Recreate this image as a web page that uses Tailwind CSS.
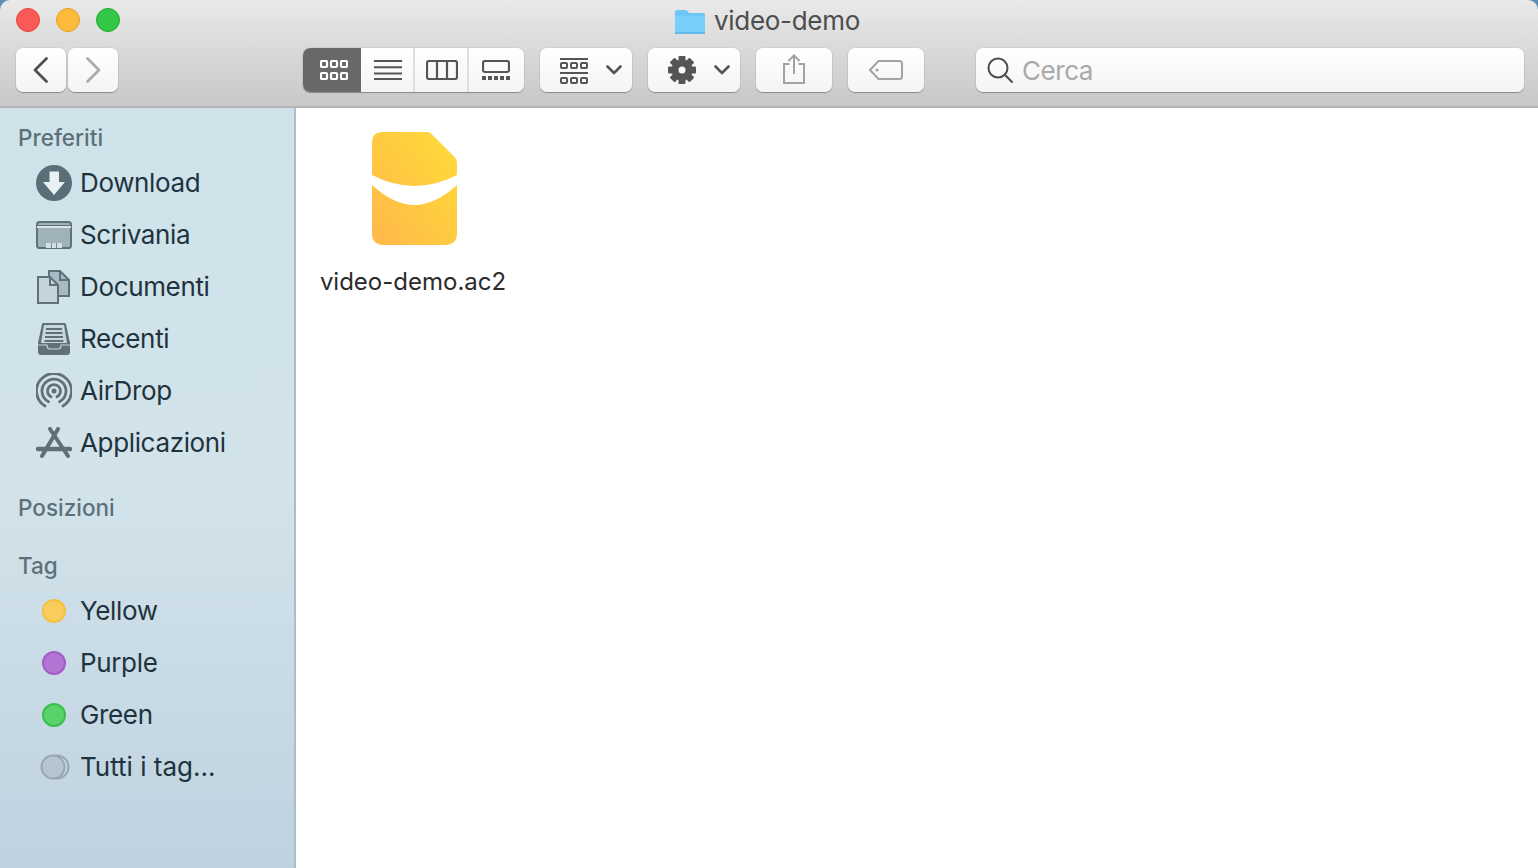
<!DOCTYPE html>
<html lang="en">
<head>
  <meta charset="UTF-8" />
  <title>video-demo</title>
  <script src="https://cdn.jsdelivr.net/npm/@tailwindcss/browser@4"></script>
</head>
<body class="h-[868px] w-[1538px] overflow-hidden bg-[#5b8db5] font-['Inter','Noto_Sans',sans-serif]">
  <div class="flex h-full flex-col overflow-hidden rounded-t-[10px]">

    <!-- Toolbar -->
    <header class="h-[108px] shrink-0 border-b-2 border-[#b4b4b4] bg-linear-to-b from-[#e9e9e9] to-[#c8c8c8]">
      <div class="relative flex h-[48px] items-start">
        <div class="ml-[16px] mt-[8px] flex gap-[16px]">
          <span class="size-[24px] rounded-full border border-[#e2463f] bg-[#fc5a56]"></span>
          <span class="size-[24px] rounded-full border border-[#dfa123] bg-[#fdbb3d]"></span>
          <span class="size-[24px] rounded-full border border-[#1fa82e] bg-[#33c748]"></span>
        </div>
        <div class="absolute left-[674px] top-[6px] flex items-center gap-[8px]">
          <svg width="32" height="27" viewBox="0 0 32 27">
            <path d="M1 4.500Q1 2 3.500 2H11Q13 2 14 3.500L15 5H29Q31 5 31 7V24Q31 26 29 26H3Q1 26 1 24Z" fill="#6cc6f7"/>
            <path d="M1 8H31V24Q31 26 29 26H3Q1 26 1 24Z" fill="#78cffb"/>
            <path d="M1 25H31" stroke="#4fa6dc" stroke-width="1"/>
          </svg>
          <span class="text-[26px] leading-[30px] tracking-[-0.3px] text-[#4d4d4d]">video-demo</span>
        </div>
      </div>

      <div class="flex h-[46px] items-start">
        <!-- back / forward -->
        <div class="ml-[16px] flex gap-[2px]">
          <button class="flex h-[44px] w-[50px] items-center justify-center rounded-[7px] bg-linear-to-b from-white to-[#f4f4f4] shadow-[0_0_0_0.5px_rgba(0,0,0,0.08),0_1px_1px_rgba(0,0,0,0.3)]">
            <svg width="18" height="28" viewBox="0 0 18 28" fill="none" stroke="#4f4f4f" stroke-width="2.800" stroke-linecap="round" stroke-linejoin="round"><path d="M14.500 2.500L3 14L14.500 25.500"/></svg>
          </button>
          <button class="flex h-[44px] w-[50px] items-center justify-center rounded-[7px] bg-linear-to-b from-white to-[#f4f4f4] shadow-[0_0_0_0.5px_rgba(0,0,0,0.08),0_1px_1px_rgba(0,0,0,0.3)]">
            <svg width="18" height="28" viewBox="0 0 18 28" fill="none" stroke="#ababab" stroke-width="2.800" stroke-linecap="round" stroke-linejoin="round"><path d="M3.500 2.500L15 14L3.500 25.500"/></svg>
          </button>
        </div>

        <!-- view modes -->
        <div class="ml-[185px] flex h-[44px] w-[221px] overflow-hidden rounded-[7px] bg-linear-to-b from-white to-[#f4f4f4] shadow-[0_0_0_0.5px_rgba(0,0,0,0.08),0_1px_1px_rgba(0,0,0,0.3)]">
          <button class="flex w-[58px] items-center bg-[#686868] pl-[17px]">
            <svg width="28" height="20" viewBox="0 0 28 20" fill="none" stroke="#fff" stroke-width="2.200"><rect x="1" y="1" width="6" height="6" rx="1"/><rect x="11" y="1" width="6" height="6" rx="1"/><rect x="21" y="1" width="6" height="6" rx="1"/><rect x="1" y="13" width="6" height="6" rx="1"/><rect x="11" y="13" width="6" height="6" rx="1"/><rect x="21" y="13" width="6" height="6" rx="1"/></svg>
          </button>
          <button class="flex w-[54px] items-center border-r-2 border-[#dedede] pl-[13px]">
            <svg width="28" height="20" viewBox="0 0 28 20" stroke="#555" stroke-width="2"><path d="M0 1H28M0 7.300H28M0 13.600H28M0 19H28"/></svg>
          </button>
          <button class="flex w-[54px] items-center border-r-2 border-[#dedede] pl-[11px]">
            <svg width="32" height="20" viewBox="0 0 32 20" fill="none" stroke="#555" stroke-width="2.200"><rect x="1" y="1" width="30" height="18" rx="2"/><path d="M11 1V19M21 1V19"/></svg>
          </button>
          <button class="flex flex-1 items-center pl-[13px]">
            <svg width="28" height="20" viewBox="0 0 28 20" fill="none" stroke="#555" stroke-width="2.200"><rect x="1" y="1" width="26" height="11" rx="2"/><path d="M0 18H28" stroke-width="4" stroke-dasharray="4 2"/></svg>
          </button>
        </div>

        <!-- arrange -->
        <button class="ml-[16px] flex h-[44px] w-[92px] items-center rounded-[7px] bg-linear-to-b from-white to-[#f4f4f4] pl-[20px] shadow-[0_0_0_0.5px_rgba(0,0,0,0.08),0_1px_1px_rgba(0,0,0,0.3)]">
          <svg class="mt-[2px]" width="28" height="26" viewBox="0 0 28 26" fill="none" stroke="#555" stroke-width="2"><path d="M0 1H28M0 15H28"/><rect x="1" y="5" width="6" height="5" rx="1"/><rect x="11" y="5" width="6" height="5" rx="1"/><rect x="21" y="5" width="6" height="5" rx="1"/><rect x="1" y="20" width="6" height="5" rx="1"/><rect x="11" y="20" width="6" height="5" rx="1"/><rect x="21" y="20" width="6" height="5" rx="1"/></svg>
          <svg class="ml-[18px]" width="16" height="10" viewBox="0 0 16 10" fill="none" stroke="#555" stroke-width="2.600" stroke-linecap="round" stroke-linejoin="round"><path d="M1.500 1.500L8 8L14.500 1.500"/></svg>
        </button>

        <!-- action -->
        <button class="ml-[16px] flex h-[44px] w-[92px] items-center rounded-[7px] bg-linear-to-b from-white to-[#f4f4f4] pl-[20px] shadow-[0_0_0_0.5px_rgba(0,0,0,0.08),0_1px_1px_rgba(0,0,0,0.3)]">
          <svg width="28" height="28" viewBox="0 0 28 28">
            <g fill="#555"><rect x="10.500" y="0" width="7" height="28" rx="1"/><rect x="10.500" y="0" width="7" height="28" rx="1" transform="rotate(45 14 14)"/><rect x="10.500" y="0" width="7" height="28" rx="1" transform="rotate(90 14 14)"/><rect x="10.500" y="0" width="7" height="28" rx="1" transform="rotate(135 14 14)"/><circle cx="14" cy="14" r="10.500"/></g>
            <circle cx="14" cy="14" r="3.500" fill="#fafafa"/>
          </svg>
          <svg class="ml-[18px]" width="16" height="10" viewBox="0 0 16 10" fill="none" stroke="#555" stroke-width="2.600" stroke-linecap="round" stroke-linejoin="round"><path d="M1.500 1.500L8 8L14.500 1.500"/></svg>
        </button>

        <!-- share -->
        <button class="ml-[16px] flex h-[44px] w-[76px] items-center justify-center rounded-[7px] bg-linear-to-b from-white to-[#f4f4f4] pb-[2px] shadow-[0_0_0_0.5px_rgba(0,0,0,0.08),0_1px_1px_rgba(0,0,0,0.3)]">
          <svg width="24" height="30" viewBox="0 0 24 30" fill="none" stroke="#a3a3a3" stroke-width="2"><path d="M7.500 10H2V29H22V10H16.500M12 20V2M6.500 7L12 1.500L17.500 7"/></svg>
        </button>

        <!-- tag -->
        <button class="ml-[16px] flex h-[44px] w-[76px] items-center justify-center rounded-[7px] bg-linear-to-b from-white to-[#f4f4f4] pb-[1px] shadow-[0_0_0_0.5px_rgba(0,0,0,0.08),0_1px_1px_rgba(0,0,0,0.3)]">
          <svg width="34" height="20" viewBox="0 0 34 20" fill="none" stroke="#a3a3a3" stroke-width="2"><path d="M9.500 1H30.500Q33 1 33 3.500V16.500Q33 19 30.500 19H9.500L1 10Z"/><circle cx="8" cy="10" r="1.500" fill="#a3a3a3" stroke="none"/></svg>
        </button>

        <!-- search -->
        <div class="ml-[52px] flex h-[44px] w-[548px] items-center rounded-[7px] bg-linear-to-b from-white to-[#f4f4f4] pl-[11px] shadow-[0_0_0_0.5px_rgba(0,0,0,0.08),0_1px_1px_rgba(0,0,0,0.3)]">
          <svg width="26" height="26" viewBox="0 0 26 26" fill="none" stroke="#4d4d4d" stroke-width="2"><circle cx="11" cy="11" r="9.500"/><path d="M17.800 17.800L25 25" stroke-linecap="round"/></svg>
          <span class="ml-[9px] mt-[2px] text-[26px] leading-[30px] tracking-[-0.45px] text-[#a9a9a9]">Cerca</span>
        </div>
      </div>
    </header>

    <div class="flex min-h-0 flex-1">
      <!-- Sidebar -->
      <aside class="w-[296px] shrink-0 border-r-2 border-[#a9bdcd] bg-linear-to-b from-[#cfe2ea] via-[#d2e3ea] to-[#bfd2e0] pl-[18px] pt-[16px]">
        <h2 class="h-[28px] text-[22.500px] leading-[28px] font-medium text-[#5d7079]">Preferiti</h2>
        <ul class="mt-[5px] text-[26px] leading-[52px] tracking-[-0.35px] text-[#1f333e]">
          <li class="flex h-[52px] items-center">
            <span class="flex w-[62px] justify-start pl-[18px]">
              <svg width="36" height="36" viewBox="0 0 36 36"><circle cx="18" cy="18" r="18" fill="#5b6d77"/><path d="M13.500 6.500H23V17H29L18 30L7 17H13.500Z" fill="#e8f0f3"/></svg>
            </span>
            Download
          </li>
          <li class="flex h-[52px] items-center">
            <span class="flex w-[62px] pl-[18px]">
              <svg width="36" height="28" viewBox="0 0 36 28"><rect x="1" y="1" width="34" height="26" rx="2.500" fill="#9fb2ba" stroke="#5f7079" stroke-width="2"/><path d="M1 6H35" stroke="#d7e4ea" stroke-width="2"/><path d="M1 4.500H35" stroke="#5f7079" stroke-width="1"/><path d="M10 27V22H26V27Z" fill="#d2e0e6"/><path d="M15.500 22V27M20.500 22V27" stroke="#78888f" stroke-width="1"/></svg>
            </span>
            Scrivania
          </li>
          <li class="flex h-[52px] items-center">
            <span class="flex w-[62px] pl-[19px]">
              <svg width="34" height="34" viewBox="0 0 34 34" stroke="#5f7079" stroke-width="2" stroke-linejoin="miter"><path d="M12 1H23L32 10V26H12Z" fill="#a8bbc4"/><path d="M23 1V10H32" fill="none"/><path d="M1 7H13L21 15V33H1Z" fill="#c3d4dc"/><path d="M13 7V15H21" fill="none"/></svg>
            </span>
            Documenti
          </li>
          <li class="flex h-[52px] items-center">
            <span class="flex w-[62px] pl-[19px]">
              <svg width="34" height="34" viewBox="0 0 34 34"><path d="M5 2Q5 1 6.500 1H27.500Q29 1 29 2L33 21V30Q33 33 30 33H4Q1 33 1 30V21Z" fill="#5f7079"/><path d="M7 3H27L30 21H4Z" fill="#c6d7de"/><path d="M9 7H25M8.500 11H25.500M8 15H26M7.500 19H26.500" stroke="#5f7079" stroke-width="1.800"/><path d="M1 23H10Q10 27 13 27H21Q24 27 24 23H33" fill="none" stroke="#c6d7de" stroke-width="1.200"/></svg>
            </span>
            Recenti
          </li>
          <li class="flex h-[52px] items-center">
            <span class="flex w-[62px] pl-[18px]">
              <svg width="36" height="36" viewBox="0 0 36 36" fill="none" stroke="#5f7079" stroke-width="2.800" stroke-linecap="round"><circle cx="18" cy="18" r="2.500" fill="#5f7079" stroke="none"/><path d="M15 23.800A6.500 6.500 0 1 1 21 23.800"/><path d="M12.500 28.700A12 12 0 1 1 23.500 28.700"/><path d="M9 33A17.500 17.500 0 1 1 27 33"/></svg>
            </span>
            AirDrop
          </li>
          <li class="flex h-[52px] items-center">
            <span class="flex w-[62px] pl-[18px]">
              <svg width="36" height="32" viewBox="0 0 36 32" fill="none" stroke="#5f7079" stroke-linecap="round"><path d="M14 2L32 29" stroke-width="4"/><path d="M22 2L6 29" stroke-width="4"/><path d="M2 22H34" stroke-width="4.500"/></svg>
            </span>
            Applicazioni
          </li>
        </ul>

        <h2 class="mt-[25px] h-[28px] text-[22.500px] leading-[28px] font-medium text-[#5d7079]">Posizioni</h2>
        <h2 class="mt-[30px] h-[28px] text-[22.500px] leading-[28px] font-medium text-[#5d7079]">Tag</h2>

        <ul class="mt-[5px] text-[26px] leading-[52px] tracking-[-0.35px] text-[#1f333e]">
          <li class="flex h-[52px] items-center"><span class="ml-[24px] mr-[14px] size-[24px] rounded-full border-2 border-[#f7bf3b] bg-[#f9cd5d]"></span>Yellow</li>
          <li class="flex h-[52px] items-center"><span class="ml-[24px] mr-[14px] size-[24px] rounded-full border-2 border-[#a45cc8] bg-[#b474d4]"></span>Purple</li>
          <li class="flex h-[52px] items-center"><span class="ml-[24px] mr-[14px] size-[24px] rounded-full border-2 border-[#35c24c] bg-[#5ad26c]"></span>Green</li>
          <li class="flex h-[52px] items-center tracking-[0px]">
            <span class="flex w-[62px] pl-[22px]">
              <svg width="30" height="26" viewBox="0 0 30 26" fill="none" stroke="#97a6b0" stroke-width="2"><circle cx="17" cy="13" r="11.500"/><circle cx="13" cy="13" r="11.500" fill="#b5c6d2"/></svg>
            </span>
            Tutti i tag...
          </li>
        </ul>
      </aside>

      <!-- File area -->
      <main class="flex-1 bg-white">
        <figure class="ml-[25px] mt-[24px] flex w-[184px] flex-col items-center">
          <svg class="ml-[2px]" width="85" height="113" viewBox="0 0 85 113">
            <defs>
              <linearGradient id="fileGrad" x1="0" y1="1" x2="1" y2="0">
                <stop offset="0" stop-color="#ffb84a"/>
                <stop offset="1" stop-color="#ffdc38"/>
              </linearGradient>
            </defs>
            <path d="M11 0H55Q57.500 0 59.500 2L82 24.500Q85 27.500 85 30V101Q85 113 73 113H12Q0 113 0 101V11Q0 0 11 0Z" fill="url(#fileGrad)"/>
            <path d="M0 43Q42.500 65 85 43V53Q63 73 42.500 73Q22 73 0 53Z" fill="#fff"/>
          </svg>
          <figcaption class="mt-[22px] text-[24px] leading-[30px] whitespace-nowrap text-[#2b2b2b]">video-demo.ac2</figcaption>
        </figure>
      </main>
    </div>
  </div>
</body>
</html>
